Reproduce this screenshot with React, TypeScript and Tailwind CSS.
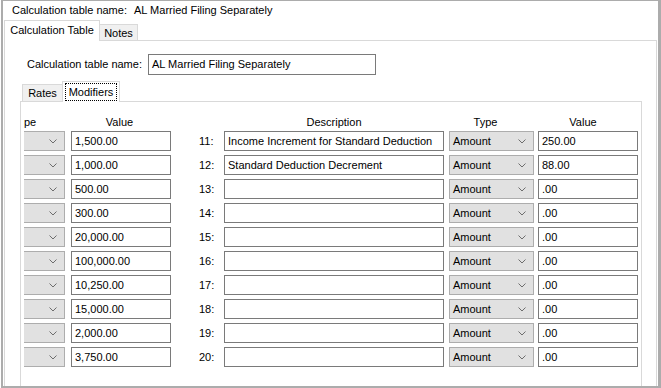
import React from "react";

const leftValues = [
  "1,500.00",
  "1,000.00",
  "500.00",
  "300.00",
  "20,000.00",
  "100,000.00",
  "10,250.00",
  "15,000.00",
  "2,000.00",
  "3,750.00",
];

const rightRows = [
  { n: 11, desc: "Income Increment for Standard Deduction", value: "250.00" },
  { n: 12, desc: "Standard Deduction Decrement", value: "88.00" },
  { n: 13, desc: "", value: ".00" },
  { n: 14, desc: "", value: ".00" },
  { n: 15, desc: "", value: ".00" },
  { n: 16, desc: "", value: ".00" },
  { n: 17, desc: "", value: ".00" },
  { n: 18, desc: "", value: ".00" },
  { n: 19, desc: "", value: ".00" },
  { n: 20, desc: "", value: ".00" },
];

const Chevron = () => (
  <svg width="8" height="5" viewBox="0 0 8 5" className="shrink-0">
    <polyline points="0.5,0.5 4,4 7.5,0.5" fill="none" stroke="#6d6d6d" strokeWidth="1" />
  </svg>
);

const Select = ({ label }: { label: string }) => (
  <div className="w-[85px] h-[20px] shrink-0 flex items-center justify-between bg-[#e1e1e1] border border-[#adadad] pl-[3px] pr-[7px]">
    <span className="leading-none">{label}</span>
    <Chevron />
  </div>
);

const Field = ({ value, w }: { value: string; w: string }) => (
  <div className={`${w} h-[20px] shrink-0 flex items-center bg-white border border-[#7a7a7a] pl-[3px] whitespace-nowrap overflow-hidden`}>
    {value}
  </div>
);

export default function App() {
  return (
    <div className="w-[661px] h-[388px] bg-white overflow-hidden font-['Liberation_Sans',Arial,sans-serif] text-[11px] text-black">
      <div className="ml-px w-[660px] h-[388px] border-t border-l-2 border-r-[3px] border-b-2 border-[#acacac] flex flex-col overflow-hidden">
        {/* header */}
        <div className="h-[19px] shrink-0 flex items-center pl-[9px]">
          <span className="w-[122px]">Calculation table name:</span>
          <span>AL Married Filing Separately</span>
        </div>

        {/* outer tabs */}
        <div className="ml-px mr-px h-[21px] shrink-0 flex items-end">
          <div className="w-[96px] h-[21px] bg-white border-l border-t border-r border-[#d9d9d9] flex items-center justify-center pb-px">
            Calculation Table
          </div>
          <div className="w-[38px] h-[17px] bg-[#f0f0f0] border-t border-r border-b border-[#d9d9d9] flex items-center justify-center pt-px">
            Notes
          </div>
          <div className="flex-1 h-px bg-[#d9d9d9]" />
        </div>

        {/* outer panel */}
        <div className="ml-px mr-px flex-1 min-h-0 border-l border-r border-[#d9d9d9] flex flex-col">
          <div className="mt-[13px] h-[20px] shrink-0 flex items-center pl-[22px]">
            <span className="w-[121px]">Calculation table name:</span>
            <div className="w-[228px] h-[21px] flex items-center border border-[#7a7a7a] pl-[3px]">
              AL Married Filing Separately
            </div>
          </div>

          {/* inner tabs */}
          <div className="mt-[7px] ml-[15px] w-[622px] h-[21px] shrink-0 flex items-end">
            <div className="w-[2px] h-px bg-[#d9d9d9]" />
            <div className="w-[40px] h-[18px] bg-[#f0f0f0] border-l border-t border-b border-[#d9d9d9] flex items-center justify-center">
              Rates
            </div>
            <div className="w-[58px] h-[21px] bg-white border-l border-t border-r border-[#d9d9d9] flex items-center justify-center px-[2px] pt-[1px] pb-[1px]">
              <div className="w-full h-full flex items-center justify-center border border-dotted border-black">
                Modifiers
              </div>
            </div>
            <div className="flex-1 h-px bg-[#d9d9d9]" />
          </div>

          {/* inner panel, scrolled to the right */}
          <div className="ml-[15px] w-[622px] flex-1 min-h-0 border-l border-r border-[#d9d9d9] pl-[3px] flex">
            <div className="flex-1 overflow-hidden">
              <div className="-ml-[44px] w-[660px] pt-[13px] flex flex-col gap-[4px]">
                <div className="h-[15px] -mb-[3px] flex items-center">
                  <div className="w-[85px] pl-[44px]">pe</div>
                  <div className="w-[6px]" />
                  <div className="w-[100px] text-center pr-[3px]">Value</div>
                  <div className="w-[53px]" />
                  <div className="w-[220px] text-center">Description</div>
                  <div className="w-[5px]" />
                  <div className="w-[85px] text-center pr-[12px]">Type</div>
                  <div className="w-[4px]" />
                  <div className="w-[100px] text-center pr-[10px]">Value</div>
                </div>
                {rightRows.map((r, i) => (
                  <div key={r.n} className="h-[20px] flex items-center">
                    <Select label="" />
                    <div className="w-[6px] shrink-0" />
                    <Field value={leftValues[i]} w="w-[100px]" />
                    <div className="w-[53px] shrink-0 pl-[28px]">{r.n}:</div>
                    <Field value={r.desc} w="w-[220px]" />
                    <div className="w-[5px] shrink-0" />
                    <Select label="Amount" />
                    <div className="w-[4px] shrink-0" />
                    <Field value={r.value} w="w-[100px]" />
                  </div>
                ))}
              </div>
            </div>
          </div>
        </div>
      </div>
    </div>
  );
}
